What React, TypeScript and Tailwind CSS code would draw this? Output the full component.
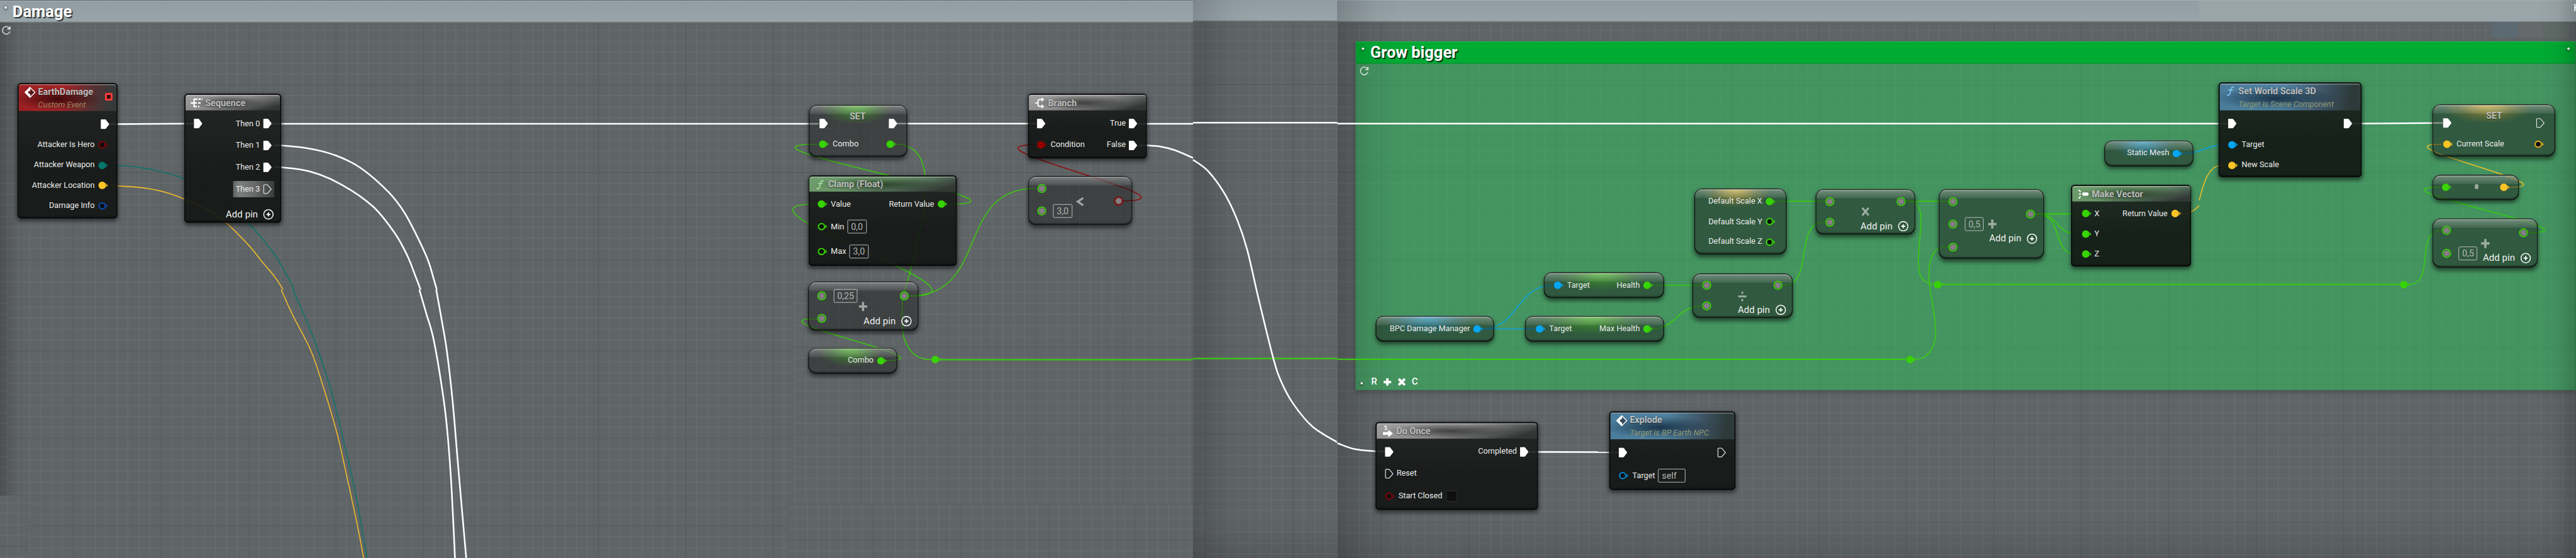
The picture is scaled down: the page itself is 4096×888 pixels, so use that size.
import React from "react";

type Pt = [number, number];
type Kids = { children?: React.ReactNode; className?: string };

const GREEN = "#37d305";
const YELLOW = "#ffc526";
const BLUE = "#05a5f3";
const RED = "#930000";

/* ---------- wires ---------- */

function through(pts: Pt[]): string {
  let d = `M${pts[0][0]} ${pts[0][1]}`;
  for (let i = 0; i < pts.length - 1; i++) {
    const p0 = pts[Math.max(0, i - 1)];
    const p1 = pts[i];
    const p2 = pts[i + 1];
    const p3 = pts[Math.min(pts.length - 1, i + 2)];
    d += `C${p1[0] + (p2[0] - p0[0]) / 6} ${p1[1] + (p2[1] - p0[1]) / 6} ${p2[0] - (p3[0] - p1[0]) / 6} ${p2[1] - (p3[1] - p1[1]) / 6} ${p2[0]} ${p2[1]}`;
  }
  return d;
}

const spline = (a: Pt, b: Pt, h: number) =>
  `M${a[0]} ${a[1]}C${a[0] + h} ${a[1]} ${b[0] - h} ${b[1]} ${b[0]} ${b[1]}`;

const execWires: string[] = [
  "M173 199L310 198",
  "M435 198.3H1310",
  "M1434 198H1659",
  "M1820 198.3H1909",
  "M1909 196.5H2140",
  "M2140 198H3565",
  "M3763 198L3909 197",
  "M2446 724L2590 724.5",
  through([[437, 233], [450, 233], [495, 238], [537, 249], [577, 269], [622, 308], [648, 342], [672, 388], [686, 420], [694, 447], [699, 464]]),
  through([[698, 464], [707, 514], [715, 562], [724, 640], [734, 757], [746, 894]]),
  through([[437, 268], [450, 268], [497, 275], [547, 296], [597, 331], [632, 374], [652, 410], [665, 443], [673, 464]]),
  through([[671, 464], [682, 502], [693, 540], [705, 607], [714, 673], [721, 757], [725.5, 840], [728, 894]]),
  through([[1822, 233], [1835, 233], [1858, 235], [1880, 240.7], [1909, 253]]),
  through([[1909, 256], [1933, 274], [1960, 311], [1980, 353], [1995.7, 400], [2013.3, 476], [2037.3, 573.3], [2050, 611], [2069.3, 646.7], [2100, 683.3], [2139.3, 708.3]]),
  through([[2140, 710], [2166.7, 719.3], [2201.7, 723], [2216, 723.5]]),
];

const dataWires: [string, string][] = [
  [YELLOW, through([[171, 297], [187, 297.7], [237, 302], [280, 313], [333, 337], [362, 357], [398, 393], [420, 420], [440, 444], [453, 464]])],
  [YELLOW, through([[450, 464], [468.5, 505], [497.5, 562], [518, 622], [539, 693], [551, 745], [570.5, 835], [582, 894]])],
  ["#05766a", through([[171, 265], [187, 265], [220, 267.7], [253, 274], [295, 286.7], [353, 321.7], [397, 357], [438, 406], [459, 441], [471, 464]])],
  ["#05766a", through([[468.5, 464], [483.4, 497], [503, 545], [514, 576], [531, 630], [549, 703], [564, 767], [578, 840], [587, 894]])],
  [GREEN, spline([1518, 327], [1308, 231], 180)],
  [GREEN, spline([1455, 474.3], [1305, 327], 170)],
  [GREEN, spline([1455, 474.3], [1657, 301.7], 130)],
  [GREEN, spline([1417, 577.7], [1307, 510.7], 115)],
  [GREEN, through([[1434, 231], [1445, 232], [1462, 240], [1474, 256], [1480, 280], [1480, 310], [1476, 353], [1456, 437], [1446, 470], [1444, 487], [1444, 520], [1447, 543], [1458, 563], [1470, 572], [1480, 575.5], [1490, 576]])],
  [RED, spline([1797, 321.7], [1658, 232], 140)],
  [GREEN, "M2840 322.5H2921"],
  [GREEN, "M3050 322.5H3117"],
  [GREEN, through([[3050, 322.7], [3062, 324], [3070.7, 333], [3074, 350], [3072, 383], [3069.7, 417], [3073, 441.7], [3082.7, 452], [3094, 456]])],
  [GREEN, through([[3064, 575.5], [3077.5, 573], [3090.6, 560], [3096.8, 540], [3095.8, 510], [3088, 460], [3087, 430], [3093, 406.7], [3103.6, 397.7], [3117, 395.7]])],
  [GREEN, spline([3257, 342.7], [3327, 375], 42)],
  [GREEN, spline([3257, 342.7], [3327, 408], 50)],
  [GREEN, spline([2853, 457.3], [2920, 355.7], 52)],
  [GREEN, "M2643 457H2723"],
  [GREEN, spline([2643, 527], [2723, 490.3], 40)],
  [BLUE, "M2371 527H2457"],
  [BLUE, spline([2371, 527], [2485, 457], 60)],
  [BLUE, spline([3490, 246], [3563, 232], 35)],
  [YELLOW, through([[3488, 343], [3500, 342], [3510, 337], [3519, 329.5]])],
  [YELLOW, through([[3519, 321], [3524, 303], [3530, 286], [3538, 273], [3548, 266], [3563, 264]])],
  [YELLOW, spline([4015, 300], [3907, 231], 110)],
  [GREEN, spline([4046, 372.7], [3905, 300], 128)],
  [GREEN, spline([3854, 455.7], [3907, 369.3], 45)],
];

const trunkWires: string[] = ["M1504 576.3H1909", "M1909 574.5H2140", "M2140 575.7H3050", "M3257 342.7H3330", "M3108 455.7H3840"];

function Wires() {
  return (
    <svg className="absolute inset-0" width="4122" height="894" fill="none">
      {dataWires.map(([c, d], i) => (
        <path key={i} d={d} stroke={c} strokeWidth="1.6" opacity="0.9" />
      ))}
      {trunkWires.map((d) => (
        <path key={d} d={d} stroke="#3bc913" strokeWidth="2.2" />
      ))}
      {execWires.map((d) => (
        <path key={d} d={d} stroke="#fff" strokeWidth="2.6" />
      ))}
    </svg>
  );
}

/* ---------- pins ---------- */

function Pin({ c, open }: { c: string; open?: boolean }) {
  return (
    <svg width="18" height="14" viewBox="0 0 18 14" className="shrink-0">
      <path d="M12.2 3.4L16 7l-3.8 3.6q1.2-3.6 0-7.2z" fill={c} opacity="0.8" />
      {open ? (
        <circle cx="6.5" cy="7" r="4.9" fill="#0c0d0f" stroke={c} strokeWidth="2.1" />
      ) : (
        <circle cx="6.5" cy="7" r="6" fill={c} />
      )}
    </svg>
  );
}

function Ring({ c = GREEN }: { c?: string }) {
  return (
    <svg width="16" height="16" viewBox="0 0 16 16" className="shrink-0">
      <circle cx="8" cy="8" r="6.3" fill="#857f83" stroke={c} strokeWidth="1.9" />
      <circle cx="8" cy="8" r="5" fill="none" stroke="#3f4a3f" strokeWidth="0.7" />
    </svg>
  );
}

function Exec({ open }: { open?: boolean }) {
  return (
    <svg width="14" height="16" viewBox="0 0 14 16" className="shrink-0">
      {open ? (
        <path d="M2.2 1h4.6L13 8l-6.2 7H2.2Q1 15 1 13.8V2.2Q1 1 2.2 1z" fill="none" stroke="#e6e6e6" strokeWidth="1.2" />
      ) : (
        <path d="M1.2.4h6.2q.6 0 1 .5l5 6.5q.5.6 0 1.2l-5 6.5q-.4.5-1 .5H1.2q-.9 0-.9-.9V1.3q0-.9.9-.9z" fill="#fff" />
      )}
    </svg>
  );
}

function Reroute({ className }: { className: string }) {
  return (
    <div className={`absolute flex ${className}`}>
      <Pin c={GREEN} />
    </div>
  );
}

/* ---------- small parts ---------- */

const Label = ({ children }: Kids) => (
  <span className="whitespace-nowrap text-[12.8px] leading-none text-[#ececec]">{children}</span>
);

const Value = ({ children, className = "" }: Kids) => (
  <span className={`flex h-[22px] items-center rounded-[2px] border border-[#b9bcbb] pl-[5px] text-[14.3px] leading-none text-[#b4b6b5] ${className}`}>
    {children}
  </span>
);

const Row = ({ children, className = "" }: Kids) => (
  <div className={`flex shrink-0 items-center ${className.includes("gap-") ? "" : "gap-[5px]"} ${className}`}>{children}</div>
);

function AddPin({ className = "" }: { className?: string }) {
  return (
    <div className={`flex shrink-0 items-center gap-[8.5px] ${className}`}>
      <span className="whitespace-nowrap text-[15px] leading-none tracking-[0.1px] text-[#f2f2f2]">Add pin</span>
      <svg width="17" height="17" viewBox="0 0 17 17" fill="none" stroke="#f4f4f4">
        <circle cx="8.5" cy="8.5" r="7.5" strokeWidth="1.6" />
        <path d="M8.5 5.3v6.4M5.3 8.5h6.4" strokeWidth="2" />
      </svg>
    </div>
  );
}

/* ---------- node shells ---------- */

const tones = {
  red: "bg-[radial-gradient(ellipse_45%_42%_at_40%_55%,rgba(30,0,0,0.75),transparent),linear-gradient(100deg,#9c2023_0%,#a02427_45%,#5a3030_72%,#383a39_92%)]",
  gray: "bg-[radial-gradient(ellipse_40%_45%_at_45%_50%,rgba(40,40,40,0.75),transparent),linear-gradient(165deg,#a0a0a0_0%,#8b8b8b_45%,#676868_65%,#333534_88%)]",
  green: "bg-[radial-gradient(ellipse_45%_50%_at_48%_52%,rgba(30,50,30,0.8),transparent),linear-gradient(165deg,#6e9f6d_0%,#6a9468_45%,#55705a_65%,#333a36_88%)]",
  blue: "bg-[radial-gradient(ellipse_45%_42%_at_40%_55%,rgba(18,40,58,0.85),transparent),linear-gradient(100deg,#4a7d9c_0%,#4f819f_45%,#40586a_70%,#2d3a3a_92%)]",
};

function Head({ tone, icon, title, sub, className, extra }: { tone: keyof typeof tones; icon: React.ReactNode; title: string; sub?: string; className: string; extra?: React.ReactNode }) {
  return (
    <div className={`mx-[1.5px] mt-[1.5px] flex shrink-0 rounded-t-[4px] shadow-[inset_0_1.5px_1px_rgba(255,255,255,0.35)] ${sub ? "pt-[2px]" : "items-center pt-[2px]"} ${tones[tone]} ${className}`}>
      <span className={`flex w-[20px] shrink-0 justify-center ${sub ? "pt-[2px]" : ""}`}>{icon}</span>
      <span className="flex flex-col pl-[3px]">
        <span className="whitespace-nowrap text-[14.5px] font-bold leading-[21px] text-[#bebebe] [text-shadow:0_1px_1px_rgba(0,0,0,0.5)]">{title}</span>
        {sub && <span className={`whitespace-nowrap text-[12.8px] italic leading-[20px] ${tone === "red" ? "text-[#a08360]" : "text-[#8f9a75]"}`}>{sub}</span>}
      </span>
      {extra}
    </div>
  );
}

const Node = ({ children, className = "" }: Kids) => (
  <div className={`absolute flex flex-col rounded-[6px] bg-[linear-gradient(rgba(28,31,29,0.88),rgba(17,20,18,0.9)_60%)] shadow-[inset_0_0_0_1.5px_rgba(8,9,9,0.9),inset_0_-3px_2px_rgba(5,6,6,0.55),0_3px_6px_1px_rgba(0,0,0,0.5)] ${className}`}>
    {children}
  </div>
);

const glows = {
  none: "",
  green: "bg-[radial-gradient(ellipse_38%_110%_at_48%_0%,rgba(78,190,40,0.85),rgba(60,140,40,0.38)_65%,transparent)]",
  yellow: "bg-[radial-gradient(ellipse_38%_110%_at_45%_0%,rgba(215,175,60,0.9),rgba(150,130,50,0.36)_65%,transparent)]",
  blue: "bg-[radial-gradient(ellipse_38%_110%_at_44%_0%,rgba(45,150,195,0.9),rgba(40,115,145,0.4)_65%,transparent)]",
};

function Glass({ children, className = "", glow = "none" }: Kids & { glow?: keyof typeof glows }) {
  return (
    <div className={`absolute overflow-hidden rounded-[13px] bg-[rgba(28,30,30,0.5)] shadow-[0_4px_6px_rgba(0,0,0,0.5)] ${className}`}>
      <div className={`absolute inset-x-0 top-0 h-[29px] ${glows[glow]}`} />
      <div className="absolute inset-x-0 top-0 h-[15px] bg-[linear-gradient(rgba(255,255,255,0.34),rgba(255,255,255,0.08))]" />
      <div className="absolute inset-0 rounded-[13px] shadow-[inset_0_0_0_1.4px_rgba(14,17,15,0.92),inset_0_2.6px_1px_rgba(255,255,255,0.4),inset_0_-3px_2px_rgba(8,12,10,0.6)]" />
      <div className="relative flex h-full justify-between">{children}</div>
    </div>
  );
}

/* ---------- glyphs ---------- */

const EventIcon = () => (
  <svg width="18" height="18" viewBox="0 0 18 18">
    <path d="M9 1L17 9 9 17 1 9z" fill="rgba(30,20,22,0.45)" stroke="#fff" strokeWidth="1.4" strokeLinejoin="round" />
    <path d="M9.600 1L1 9l8.600 8v-4.600L7.800 10.800H6.200V7.200h1.600L9.600 5.600z" fill="#fff" />
  </svg>
);

const SequenceIcon = () => (
  <svg width="20" height="16" viewBox="0 0 20 16" stroke="#fff" fill="none" strokeWidth="2.2">
    <path d="M0 8h10M5.500 1.500v12.700M5 2h6M5 13.800h5" />
    <path d="M12.500 2h6.500M12 8h4.500M12 13.800h2" strokeDasharray="4 1.500" />
  </svg>
);

const BranchIcon = () => (
  <svg width="16" height="18" viewBox="0 0 16 18" stroke="#fff" fill="none" strokeWidth="1.900">
    <path d="M0 9h5M11 3.500H7.500Q5 3.500 5 6v6q0 2.500 2.500 2.500H11" />
    <path d="M10.500 0l4.500 3.500-4.500 3.500zM10.500 11l4.500 3.500-4.500 3.500z" fill="#fff" stroke="none" />
  </svg>
);

const OnceIcon = () => (
  <svg width="18" height="20" viewBox="0 0 18 20">
    <path d="M3 3l2-1.500h1V7M3.500 7h4" stroke="#fff" strokeWidth="1.300" fill="none" />
    <path d="M1 11.200h8.500V7.500l7.500 6-7.500 6v-3.700H1z" fill="#fff" />
  </svg>
);

const FuncIcon = ({ c }: { c: string }) => (
  <svg width="14" height="16" viewBox="0 0 14 16" fill="none" stroke={c} strokeWidth="1.700" strokeLinecap="round">
    <path d="M12.300 2.400Q11.500 1 10 1.500 8.600 2 8 5L6.500 11.500Q5.800 14.300 4.200 14.600 2.600 14.800 2 13.800M4.300 6h6.400" />
  </svg>
);

const MakeIcon = () => (
  <svg width="18" height="16" viewBox="0 0 18 16" fill="none" stroke="#fff" strokeWidth="1.800">
    <path d="M1 1.200l1.800 1.200 1.200 2.400M1 14.800l1.800-1.200L4 11.200M1.500 8h3.500" />
    <rect x="7" y="5.300" width="10" height="5.400" rx="1.800" fill="#fff" stroke="none" />
  </svg>
);

const Refresh = ({ className }: { className: string }) => (
  <svg width="16" height="16" viewBox="0 0 16 16" fill="none" stroke="#e3e8e4" strokeWidth="1.400" className={`absolute ${className}`}>
    <path d="M13.600 5A6.100 6.100 0 1 0 14 9.200" />
    <path d="M14 1.200v4.300H9.600" strokeWidth="1.700" />
  </svg>
);

function Op({ kind, className }: { kind: "plus" | "times" | "divide" | "less"; className: string }) {
  return (
    <svg width="16" height="16" viewBox="0 0 16 16" stroke="rgba(200,205,202,0.72)" fill="none" strokeWidth="3.600" className={`absolute ${className}`}>
      {kind === "plus" && <path d="M8 .7v14.600M1.300 8h13.400" />}
      {kind === "times" && <path d="M3 2l10 12M13 2L3 14" strokeWidth="3.200" />}
      {kind === "divide" && <path d="M1.500 8h13M8 .5v3.200M8 12.300v3.200" strokeWidth="3" />}
      {kind === "less" && <path d="M13.200 2.200L4.500 8l8.700 5.800" strokeWidth="3.200" />}
    </svg>
  );
}

/* ---------- canvas backdrop ---------- */

const GRID =
  "absolute overflow-hidden bg-[#5f6466] bg-[linear-gradient(to_right,#515659_1px,transparent_1px),linear-gradient(to_bottom,#515659_1px,transparent_1px),linear-gradient(to_right,#6a6f71_1px,transparent_1px,transparent_17px,#6a6f71_17px,#6a6f71_18px,transparent_18px),linear-gradient(to_bottom,#6a6f71_1px,transparent_1px,transparent_17px,#6a6f71_17px,#6a6f71_18px,transparent_18px)] bg-[length:140px_140px,140px_140px,35px_35px,35px_35px]";

const BAR = "absolute bg-[linear-gradient(#919da3,#9aa5aa)] border-b border-[#7e898e]";
const Dot = ({ className }: { className: string }) => (
  <i className={`absolute size-[4px] rounded-full bg-[#e9efe9] shadow-[0_1px_3px_1px_rgba(0,0,0,0.35)] ${className}`} />
);

function Backdrop() {
  return (
    <>
      <div className={`${GRID} left-0 top-0 h-[894px] w-[1909px] bg-[position:117px_136px]`} />
      <div className={`${GRID} left-[12px] top-[464px] h-[430px] w-[1258px] bg-[position:105px_98px]`} />
      <div className={`${GRID} left-[1909px] top-0 h-[894px] w-[231px] bg-[position:20px_135px]`} />
      <div className={`${GRID} left-[2140px] top-0 h-[894px] w-[1982px] bg-[position:70px_136px]`} />
      <div className={`${GRID} left-[1261px] top-[807px] h-[87px] w-[668px] bg-[position:136px_58px]`} />
      <div className={`${GRID} left-0 top-[794px] h-[100px] w-[44px] bg-[position:117px_81px]`} />
      <div className={`${BAR} left-0 top-[1px] h-[35px] w-[1909px] border-t border-t-[#a6b1b6]`} />
      <div className={`${BAR} left-[1909px] top-0 h-[34px] w-[231px]`} />
      <div className={`${BAR} left-[2140px] top-0 h-[35px] w-[1982px] border-t border-t-[#a6b1b6]`} />
      <div className="absolute left-[3519px] top-[1px] h-[33px] w-[603px] bg-[#9aa5aa]" />
      <div className="absolute left-[3987px] top-[35px] flex h-[26px] w-[125px] overflow-hidden rounded-b-[3px]">
        <span className="flex-1 bg-[#5b6a73]" />
        <span className="flex-1 bg-[#66686a]" />
        <span className="flex-1 bg-[#606a66]" />
      </div>
      <div className="absolute left-[2169px] top-[66px] h-[559px] w-[1953px] border border-[rgba(50,130,80,0.6)] bg-[rgba(36,207,89,0.45)] shadow-[0_3px_6px_rgba(0,0,0,0.25)]">
        <div className="flex h-[35px] w-full items-center border-y border-b-[#07902c] border-t-[#18b843] bg-[#00ab33] pl-[22.500px]">
          <h2 className="text-[25.600px] font-bold leading-none text-white [text-shadow:2px_2px_1px_rgba(0,30,10,0.85)]">Grow bigger</h2>
        </div>
      </div>
      <div className="absolute left-0 top-[36px] h-[758px] w-[44px] bg-[linear-gradient(to_right,rgba(0,0,0,0.2),rgba(0,0,0,0.04)_60%,transparent)]" />
      <div className="absolute left-[1909px] top-0 h-[894px] w-[110px] bg-[linear-gradient(to_right,rgba(0,0,0,0.15),rgba(0,0,0,0.03)_55%,transparent)]" />
      <div className="absolute left-[2140px] top-0 h-[894px] w-[110px] bg-[linear-gradient(to_right,rgba(0,0,0,0.18),rgba(0,0,0,0.04)_55%,transparent)]" />
      <div className="absolute left-[1909px] top-[834px] h-[60px] w-[2213px] bg-[linear-gradient(to_top,rgba(0,0,0,0.1),transparent)]" />
      <div className="absolute left-[4062px] top-0 h-[894px] w-[60px] bg-[linear-gradient(to_left,rgba(0,0,0,0.18),rgba(0,0,0,0.04)_50%,transparent)]" />
      <h1 className="absolute left-[20px] top-[5px] text-[25.700px] font-bold leading-[26px] text-white [text-shadow:2px_2px_1px_rgba(30,35,40,0.85)]">Damage</h1>
      <Dot className="left-[7px] top-[10px]" />
      <Dot className="left-[2179px] top-[76px]" />
      <Dot className="left-[4108px] top-[76px]" />
      <Dot className="left-[2177px] top-[612px]" />
      <Refresh className="left-[2px] top-[41px]" />
      <Refresh className="left-[2175px] top-[106px]" />
      <span className="absolute left-[4118px] top-[5px] text-[16px] leading-[16px] text-white">K</span>
      <div className="absolute left-[2194px] top-[603px] flex h-[17px] items-center text-[15px] font-medium leading-none text-white">
        <span className="w-[19.500px]">R</span>
        <svg width="12" height="12" viewBox="0 0 12 12" stroke="#fff" strokeWidth="4">
          <path d="M6 0v12M0 6h12" />
        </svg>
        <svg width="12" height="12" viewBox="0 0 12 12" stroke="#fff" strokeWidth="4" className="ml-[11px]">
          <path d="M1 1l10 10M11 1L1 11" />
        </svg>
        <span className="ml-[10.500px]">C</span>
      </div>
    </>
  );
}

/* ---------- nodes ---------- */

const Body = ({ children }: Kids) => <div className="flex justify-between">{children}</div>;
const Col = ({ children, className = "" }: Kids) => <div className={`flex flex-col ${className}`}>{children}</div>;
const SetTitle = ({ className = "" }: Kids) => (
  <span className={`absolute top-[7.500px] text-[14.200px] font-bold leading-[20px] text-[#bcbcb8] [text-shadow:0_1px_1px_rgba(0,0,0,0.4)] ${className}`}>SET</span>
);

function Nodes() {
  return (
    <>
      <Node className="left-[28.300px] top-[133px] h-[217px] w-[159.400px]">
        <Head
          tone="red"
          icon={<EventIcon />}
          title="EarthDamage"
          sub="Custom Event"
          className="h-[43.500px] pl-[8px]"
          extra={<span className="ml-auto mr-[6.500px] mt-[12.500px] size-[12px] rounded-[2px] border-[3px] border-[#ff3b3b] bg-[#3a0a0a]" />}
        />
        <Col className="items-end pr-[13.200px] pt-[3.700px]">
          <Row className="h-[34px]"><Exec /></Row>
          <Row className="h-[32.600px]"><Label>Attacker Is Hero</Label><Pin c="#7d0506" open /></Row>
          <Row className="h-[32.600px]"><Label>Attacker Weapon</Label><Pin c="#05766a" /></Row>
          <Row className="h-[32.600px]"><Label>Attacker Location</Label><Pin c={YELLOW} /></Row>
          <Row className="h-[32.600px]"><Label>Damage Info</Label><Pin c="#0a4bab" open /></Row>
        </Col>
      </Node>

      <Node className="left-[295.300px] top-[150.300px] h-[206.400px] w-[154.400px]">
        <Head tone="gray" icon={<SequenceIcon />} title="Sequence" className="h-[25.200px] pl-[8.500px]" />
        <Body>
          <Col className="pl-[15px] pt-[3.500px]"><Row className="h-[35px]"><Exec /></Row></Col>
          <Col className="items-end pr-[14.700px] pt-[3.500px]">
            <Row className="h-[35px]"><Label>Then 0</Label><Exec /></Row>
            <Row className="h-[35px]"><Label>Then 1</Label><Exec /></Row>
            <Row className="h-[35px]"><Label>Then 2</Label><Exec /></Row>
            <Row className="-mr-[4px] mb-[4.500px] mt-[4.500px] h-[26px] bg-[linear-gradient(to_right,#606262,#7e8080_15%,#6a6c6c_50%,#3a3c3c)] px-[4px]"><Label>Then 3</Label><Exec open /></Row>
            <AddPin className="-mr-[3.300px] h-[46px]" />
          </Col>
        </Body>
      </Node>

      <Glass glow="green" className="left-[1293.500px] top-[168.300px] h-[83.400px] w-[158.200px]">
        <Col className="pl-[16px] pt-[21px]">
          <Row className="h-[17px] pl-[1px]"><Exec /></Row>
          <Row className="mt-[16.500px] h-[17px]"><Pin c={GREEN} /><Label>Combo</Label></Row>
        </Col>
        <SetTitle className="left-[66px]" />
        <Col className="items-start pr-[16px] pt-[21px]">
          <Row className="h-[17px] pl-[4px]"><Exec /></Row>
          <Row className="mt-[16.500px] h-[17px]"><Pin c={GREEN} /></Row>
        </Col>
      </Glass>

      <Node className="left-[1293.500px] top-[281.300px] h-[144.400px] w-[237.200px]">
        <Head tone="green" icon={<FuncIcon c="#a8dba0" />} title="Clamp (Float)" className="h-[24.200px] pl-[7px]" />
        <Body>
          <Col className="pl-[14px] pt-[3px]">
            <Row className="h-[34px] gap-[4px]"><Pin c={GREEN} /><Label>Value</Label></Row>
            <Row className="h-[38px] gap-[4px]"><Pin c={GREEN} open /><Label>Min</Label><Value className="ml-[1px] w-[31px]">0,0</Value></Row>
            <Row className="h-[42px] gap-[4px]"><Pin c={GREEN} open /><Label>Max</Label><Value className="ml-[1px] w-[31px]">3,0</Value></Row>
          </Col>
          <Col className="pr-[13px] pt-[3px]"><Row className="h-[34px]"><Label>Return Value</Label><Pin c={GREEN} /></Row></Col>
        </Body>
      </Node>

      <Glass className="left-[1293.300px] top-[451.300px] h-[78.400px] w-[176.500px]">
        <Col className="pl-[14px] pt-[12px]">
          <Row className="h-[22px] gap-[10.500px]"><Ring /><Value className="w-[38.600px]">0,25</Value></Row>
          <Row className="mt-[14px] h-[22px]"><Ring /></Row>
        </Col>
        <Op kind="plus" className="left-[79.500px] top-[32px]" />
        <Col className="items-end pr-[11px] pt-[12px]">
          <Row className="h-[22px] pr-[3.500px]"><Ring /></Row>
          <AddPin className="mt-[18px] h-[22px]" />
        </Col>
      </Glass>

      <Glass glow="green" className="left-[1293.300px] top-[557px] h-[41.700px] w-[143.100px]">
        <Row className="ml-auto h-[41.700px] pr-[15.500px]"><Label>Combo</Label><Pin c={GREEN} /></Row>
      </Glass>

      <Node className="left-[1644.500px] top-[150px] h-[103.700px] w-[190.500px]">
        <Head tone="gray" icon={<BranchIcon />} title="Branch" className="h-[25.200px] pl-[8px]" />
        <Body>
          <Col className="pl-[14px] pt-[3.500px]">
            <Row className="h-[35px]"><Exec /></Row>
            <Row className="h-[34px] gap-[4.500px]"><Pin c={RED} /><Label>Condition</Label></Row>
          </Col>
          <Col className="items-end pr-[14.700px] pt-[3.500px]">
            <Row className="h-[35px]"><Label>True</Label><Exec /></Row>
            <Row className="h-[35px]"><Label>False</Label><Exec /></Row>
          </Col>
        </Body>
      </Node>

      <Glass className="left-[1644.500px] top-[282px] h-[78.700px] w-[167.900px]">
        <Col className="pl-[14px] pt-[8.700px]">
          <Row className="h-[22px]"><Ring /></Row>
          <Row className="mt-[14px] h-[22px] gap-[10.500px]"><Ring /><Value className="w-[31px]">3,0</Value></Row>
        </Col>
        <Op kind="less" className="left-[75px] top-[33px]" />
        <Col className="pr-[14.500px] pt-[28.500px]"><Row className="h-[22px]"><Ring c="#930000" /></Row></Col>
      </Glass>

      <Reroute className="left-[1490px] top-[569px]" />
      <Reroute className="left-[3050px] top-[568.500px]" />
      <Reroute className="left-[3093.500px] top-[449px]" />
      <Reroute className="left-[3840px] top-[448.700px]" />

      <Glass glow="blue" className="left-[2201.200px] top-[506px] h-[42px] w-[189.800px]">
        <Row className="ml-auto h-[42px] pr-[15.500px]"><Label>BPC Damage Manager</Label><Pin c={BLUE} /></Row>
      </Glass>

      <Glass glow="green" className="left-[2469.600px] top-[436px] h-[42px] w-[193.400px]">
        <Row className="h-[42px] gap-[4px] pl-[16px]"><Pin c={BLUE} /><Label>Target</Label></Row>
        <Row className="h-[42px] pr-[16px]"><Label>Health</Label><Pin c={GREEN} /></Row>
      </Glass>

      <Glass glow="green" className="left-[2440px] top-[506px] h-[42px] w-[223px]">
        <Row className="h-[42px] gap-[4px] pl-[17px]"><Pin c={BLUE} /><Label>Target</Label></Row>
        <Row className="h-[42px] pr-[16px]"><Label>Max Health</Label><Pin c={GREEN} /></Row>
      </Glass>

      <Glass className="left-[2708.200px] top-[438px] h-[71.700px] w-[160.600px]">
        <Col className="pl-[15px] pt-[8.300px]">
          <Row className="h-[22px]"><Ring /></Row>
          <Row className="mt-[11px] h-[22px]"><Ring /></Row>
        </Col>
        <Op kind="divide" className="left-[71.500px] top-[28.500px]" />
        <Col className="items-end pr-[11px] pt-[8.300px]">
          <Row className="h-[22px] pr-[4.500px]"><Ring /></Row>
          <AddPin className="mt-[17.500px] h-[22px]" />
        </Col>
      </Glass>

      <Glass glow="yellow" className="left-[2710.900px] top-[302px] h-[105.700px] w-[148px]">
        <Col className="ml-auto items-end pr-[16px] pt-[4.500px]">
          <Row className="h-[32.500px]"><Label>Default Scale X</Label><Pin c={GREEN} /></Row>
          <Row className="h-[32.500px]"><Label>Default Scale Y</Label><Pin c={GREEN} open /></Row>
          <Row className="h-[32.500px]"><Label>Default Scale Z</Label><Pin c={GREEN} open /></Row>
        </Col>
      </Glass>

      <Glass className="left-[2905.400px] top-[303px] h-[72.700px] w-[159.600px]">
        <Col className="pl-[15px] pt-[8.700px]">
          <Row className="h-[22px]"><Ring /></Row>
          <Row className="mt-[11px] h-[22px]"><Ring /></Row>
        </Col>
        <Op kind="times" className="left-[71.500px] top-[28.300px]" />
        <Col className="items-end pr-[11px] pt-[8.700px]">
          <Row className="h-[22px] pr-[3.500px]"><Ring /></Row>
          <AddPin className="mt-[17.500px] h-[22px]" />
        </Col>
      </Glass>

      <Glass className="left-[3102px] top-[303px] h-[111.700px] w-[169px]">
        <Col className="pl-[14.500px] pt-[8.700px]">
          <Row className="h-[22px]"><Ring /></Row>
          <Row className="mt-[14.300px] h-[22px] gap-[11.500px]"><Ring /><Value className="w-[30px]">0,5</Value></Row>
          <Row className="mt-[14.700px] h-[22px]"><Ring /></Row>
        </Col>
        <Op kind="plus" className="left-[77.500px] top-[48.300px]" />
        <Col className="items-end pr-[11px] pt-[28.700px]">
          <Row className="h-[22px] pr-[3.500px]"><Ring /></Row>
          <AddPin className="mt-[17.500px] h-[22px]" />
        </Col>
      </Glass>

      <Node className="left-[3314px] top-[296px] h-[131px] w-[192px]">
        <Head tone="green" icon={<MakeIcon />} title="Make Vector" className="h-[25.200px] pl-[8.500px]" />
        <Body>
          <Col className="pl-[16.500px] pt-[3.500px]">
            <Row className="h-[32.500px] gap-[3px]"><Pin c={GREEN} /><Label>X</Label></Row>
            <Row className="h-[32.500px] gap-[3px]"><Pin c={GREEN} /><Label>Y</Label></Row>
            <Row className="h-[32.500px] gap-[3px]"><Pin c={GREEN} /><Label>Z</Label></Row>
          </Col>
          <Col className="pr-[14.500px] pt-[3.500px]"><Row className="h-[32.500px]"><Label>Return Value</Label><Pin c={YELLOW} /></Row></Col>
        </Body>
      </Node>

      <Glass glow="blue" className="left-[3366.600px] top-[225px] h-[41.700px] w-[143.100px]">
        <Row className="ml-auto h-[41.700px] pr-[15.500px]"><Label>Static Mesh</Label><Pin c={BLUE} /></Row>
      </Glass>

      <Node className="left-[3550.400px] top-[132px] h-[152px] w-[228.500px]">
        <Head tone="blue" icon={<FuncIcon c="#7cc4f0" />} title="Set World Scale 3D" sub="Target is Scene Component" className="h-[43.500px] pl-[7px]" />
        <Body>
          <Col className="pl-[14.500px] pt-[3.500px]">
            <Row className="h-[35px]"><Exec /></Row>
            <Row className="h-[33px] gap-[4px]"><Pin c={BLUE} /><Label>Target</Label></Row>
            <Row className="h-[32px] gap-[4px]"><Pin c={YELLOW} /><Label>New Scale</Label></Row>
          </Col>
          <Col className="pr-[15px] pt-[3.500px]"><Row className="h-[35px]"><Exec /></Row></Col>
        </Body>
      </Node>

      <Glass glow="yellow" className="left-[3892.300px] top-[167.300px] h-[83.700px] w-[196.400px]">
        <Col className="pl-[16.500px] pt-[21px]">
          <Row className="h-[17px]"><Exec /></Row>
          <Row className="mt-[17.500px] h-[17px] gap-[4px]"><Pin c={YELLOW} /><Label>Current Scale</Label></Row>
        </Col>
        <SetTitle className="left-[86px]" />
        <Col className="items-end pr-[15.500px] pt-[21px]">
          <Row className="h-[17px] pr-[1.500px]"><Exec open /></Row>
          <Row className="mt-[17.500px] h-[17px]"><Pin c="#d9a51c" open /></Row>
        </Col>
      </Glass>

      <Glass className="left-[3892.300px] top-[280.300px] h-[40.700px] w-[139.200px]">
        <Row className="h-[40px] pl-[14.500px]"><Pin c={GREEN} /></Row>
        <Row className="h-[38px] pl-[1px]"><i className="h-[8px] w-[6px] rounded-full bg-[#9aa79f]" /></Row>
        <Row className="h-[40px] pr-[13.500px]"><Pin c={YELLOW} /></Row>
      </Glass>

      <Glass className="left-[3892.300px] top-[350.300px] h-[78.400px] w-[168.700px]">
        <Col className="pl-[15px] pt-[8px]">
          <Row className="h-[22px]"><Ring /></Row>
          <Row className="mt-[14.700px] h-[22px] gap-[10.500px]"><Ring /><Value className="w-[30px]">0,5</Value></Row>
        </Col>
        <Op kind="plus" className="left-[76.500px] top-[32px]" />
        <Col className="items-end pr-[11px] pt-[11.400px]">
          <Row className="h-[22px] pr-[3.500px]"><Ring /></Row>
          <AddPin className="mt-[18.500px] h-[22px]" />
        </Col>
      </Glass>

      <Node className="left-[2201.300px] top-[676px] h-[141px] w-[259.700px]">
        <Head tone="gray" icon={<OnceIcon />} title="Do Once" className="h-[25.500px] pl-[8.500px]" />
        <Body>
          <Col className="pl-[14.500px] pt-[3.200px]">
            <Row className="h-[35px]"><Exec /></Row>
            <Row className="h-[35px]"><Exec open /><Label>Reset</Label></Row>
            <Row className="h-[37px] gap-[4px]"><Pin c="#7d0506" open /><Label>Start Closed</Label><span className="ml-[2px] h-[18px] w-[18px] rounded-[2px] border border-[#303232] bg-[#0f0f10]" /></Row>
          </Col>
          <Col className="pr-[14.700px] pt-[3.200px]"><Row className="h-[35px]"><Label>Completed</Label><Exec /></Row></Col>
        </Body>
      </Node>

      <Node className="left-[2575.400px] top-[659px] h-[126px] w-[201.400px]">
        <Head tone="blue" icon={<EventIcon />} title="Explode" sub="Target is BP Earth NPC" className="h-[43.500px] pl-[8px]" />
        <Body>
          <Col className="pl-[14.700px] pt-[3px]">
            <Row className="h-[35px]"><Exec /></Row>
            <Row className="h-[40px] gap-[4px]"><Pin c="#0585cc" open /><Label>Target</Label><Value className="ml-[1px] w-[44px]">self</Value></Row>
          </Col>
          <Col className="pr-[14.500px] pt-[3px]"><Row className="h-[35px]"><Exec open /></Row></Col>
        </Body>
      </Node>
    </>
  );
}

export default function App() {
  return (
    <main className="h-[888px] w-[4096px] overflow-hidden bg-[#5f6466] font-['Roboto',sans-serif]">
      <div className="relative h-[894px] w-[4122px] origin-top-left overflow-hidden [transform:scale(0.99369,0.99329)]">
        <Backdrop />
        <Wires />
        <Nodes />
      </div>
    </main>
  );
}
